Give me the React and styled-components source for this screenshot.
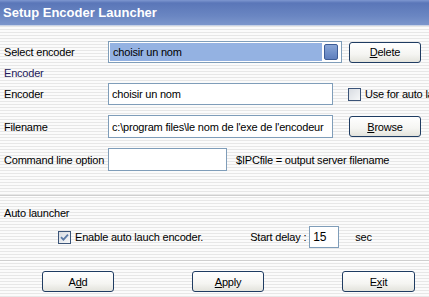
import styled, { createGlobalStyle } from "styled-components";

const GlobalStyle = createGlobalStyle`
  html, body {
    margin: 0;
    padding: 0;
  }
  body {
    font-family: "Liberation Sans", Arial, sans-serif;
    font-size: 11px;
    letter-spacing: -0.2px;
    color: #000;
  }
`;

const Window = styled.div`
  width: 429px;
  height: 297px;
  overflow: hidden;
  display: flex;
  flex-direction: column;
  background: repeating-linear-gradient(
    to bottom,
    #fbfbfb 0px,
    #fbfbfb 2px,
    #e7e7e7 2px,
    #e7e7e7 3px
  );
`;

const TitleBar = styled.div`
  height: 25px;
  flex: none;
  display: flex;
  align-items: center;
  padding-left: 3px;
  background: linear-gradient(to bottom, #7e97d0 0px, #5a76b8 3px, #6a86c2 16px, #7c96cc 25px);
  border-bottom: 1px solid #c8d2e6;
  color: #fff;
  font-weight: bold;
  font-size: 13px;
  letter-spacing: 0;
`;

const Body = styled.div`
  display: flex;
  flex-direction: column;
  padding-left: 4px;
`;

const Row = styled.div`
  display: flex;
  align-items: center;
  height: ${(p) => p.h || 22}px;
  margin-top: ${(p) => p.mt || 0}px;
  white-space: nowrap;
`;

const Label = styled.span`
  width: 104px;
  flex: none;
`;

const Section = styled.div`
  margin-top: ${(p) => p.mt || 0}px;
  height: 13px;
  line-height: 13px;
  color: ${(p) => p.color || "#000"};
`;

const Separator = styled.div`
  margin-top: ${(p) => p.mt || 0}px;
  margin-left: -4px;
  height: 1px;
  background: #cfcfcf;
  border-bottom: 1px solid #fff;
`;

const Input = styled.div`
  box-sizing: border-box;
  width: ${(p) => p.w}px;
  height: ${(p) => p.h || 22}px;
  flex: none;
  background: #fff;
  border: 1px solid #7f9db9;
  padding: 0 3px;
  display: flex;
  align-items: center;
  font-size: ${(p) => p.fs || 11}px;
  overflow: hidden;
`;

const Combo = styled.div`
  box-sizing: border-box;
  width: 234px;
  height: 22px;
  flex: none;
  border: 1px solid #7f9db9;
  background: #fff;
  padding: 1px;
  display: flex;
  gap: 1px;
`;

const ComboValue = styled.div`
  flex: 1;
  background: #94b2e2;
  display: flex;
  align-items: center;
  padding-left: 3px;
`;

const ComboArrow = styled.div`
  width: 12px;
  margin: 1px 2px 1px 1px;
  border: 1px solid #3d5c96;
  border-radius: 2px;
  background: linear-gradient(to bottom, #8aa6d6, #6e8ec8 60%, #5f7fbd);
`;

const Button = styled.div`
  box-sizing: border-box;
  width: ${(p) => p.w || 72}px;
  height: 21px;
  flex: none;
  margin-left: ${(p) => p.ml || 0}px;
  border: 1px solid #1f3c62;
  border-radius: 3px;
  background: linear-gradient(to bottom, #ffffff 0%, #f5f5f2 60%, #e3e3dc 100%);
  display: flex;
  align-items: center;
  justify-content: center;
  font-size: 11px;
`;

const Key = styled.span`
  text-decoration: underline;
`;

const CheckBox = styled.div`
  box-sizing: border-box;
  width: 13px;
  height: 13px;
  flex: none;
  margin-left: ${(p) => p.ml || 0}px;
  margin-right: 4px;
  border: 1px solid #3b5478;
  background: linear-gradient(135deg, #d8dce2, #f6f7f8);
  display: flex;
  align-items: center;
  justify-content: center;
`;

const Text = styled.span`
  margin-left: ${(p) => p.ml || 0}px;
  margin-right: ${(p) => p.mr || 0}px;
`;

const ButtonRow = styled.div`
  display: flex;
  margin-top: 9px;
  padding-left: 38px;
  gap: 78px;
`;

export default function App() {
  return (
    <>
      <GlobalStyle />
      <Window>
        <TitleBar>Setup Encoder Launcher</TitleBar>
        <Body>
          <Row mt={15}>
            <Label>Select encoder</Label>
            <Combo>
              <ComboValue>choisir un nom</ComboValue>
              <ComboArrow />
            </Combo>
            <Button ml={7}>
              <span><Key>D</Key>elete</span>
            </Button>
          </Row>
          <Section mt={4} color="#241a5a">Encoder</Section>
          <Row mt={3}>
            <Label>Encoder</Label>
            <Input w={225}>choisir un nom</Input>
            <CheckBox ml={15} />
            <Text>Use for auto launch</Text>
          </Row>
          <Row mt={10} h={23}>
            <Label>Filename</Label>
            <Input w={225} h={23}>c:\program files\le nom de l'exe de l'encodeur</Input>
            <Button ml={16}>
              <span><Key>B</Key>rowse</span>
            </Button>
          </Row>
          <Row mt={10} h={23}>
            <Label>Command line option</Label>
            <Input w={119} h={23} />
            <Text ml={9}>$IPCfile = output server filename</Text>
          </Row>
          <Separator mt={24} />
          <Section mt={10}>Auto launcher</Section>
          <Row mt={6} h={22}>
            <CheckBox ml={54}>
              <svg width="9" height="9" viewBox="0 0 9 9">
                <path d="M1 4.2 L3.4 6.6 L8 1.6" fill="none" stroke="#5b7aa6" strokeWidth="1.8" />
              </svg>
            </CheckBox>
            <Text>Enable auto lauch encoder.</Text>
            <Text ml={47} mr={3}>Start delay :</Text>
            <Input w={30} h={22} fs={12}>15</Input>
            <Text ml={16}>sec</Text>
          </Row>
          <Separator mt={12} />
          <ButtonRow>
            <Button>
              <span>A<Key>d</Key>d</span>
            </Button>
            <Button>
              <span><Key>A</Key>pply</span>
            </Button>
            <Button w={73}>
              <span>E<Key>x</Key>it</span>
            </Button>
          </ButtonRow>
        </Body>
      </Window>
    </>
  );
}
